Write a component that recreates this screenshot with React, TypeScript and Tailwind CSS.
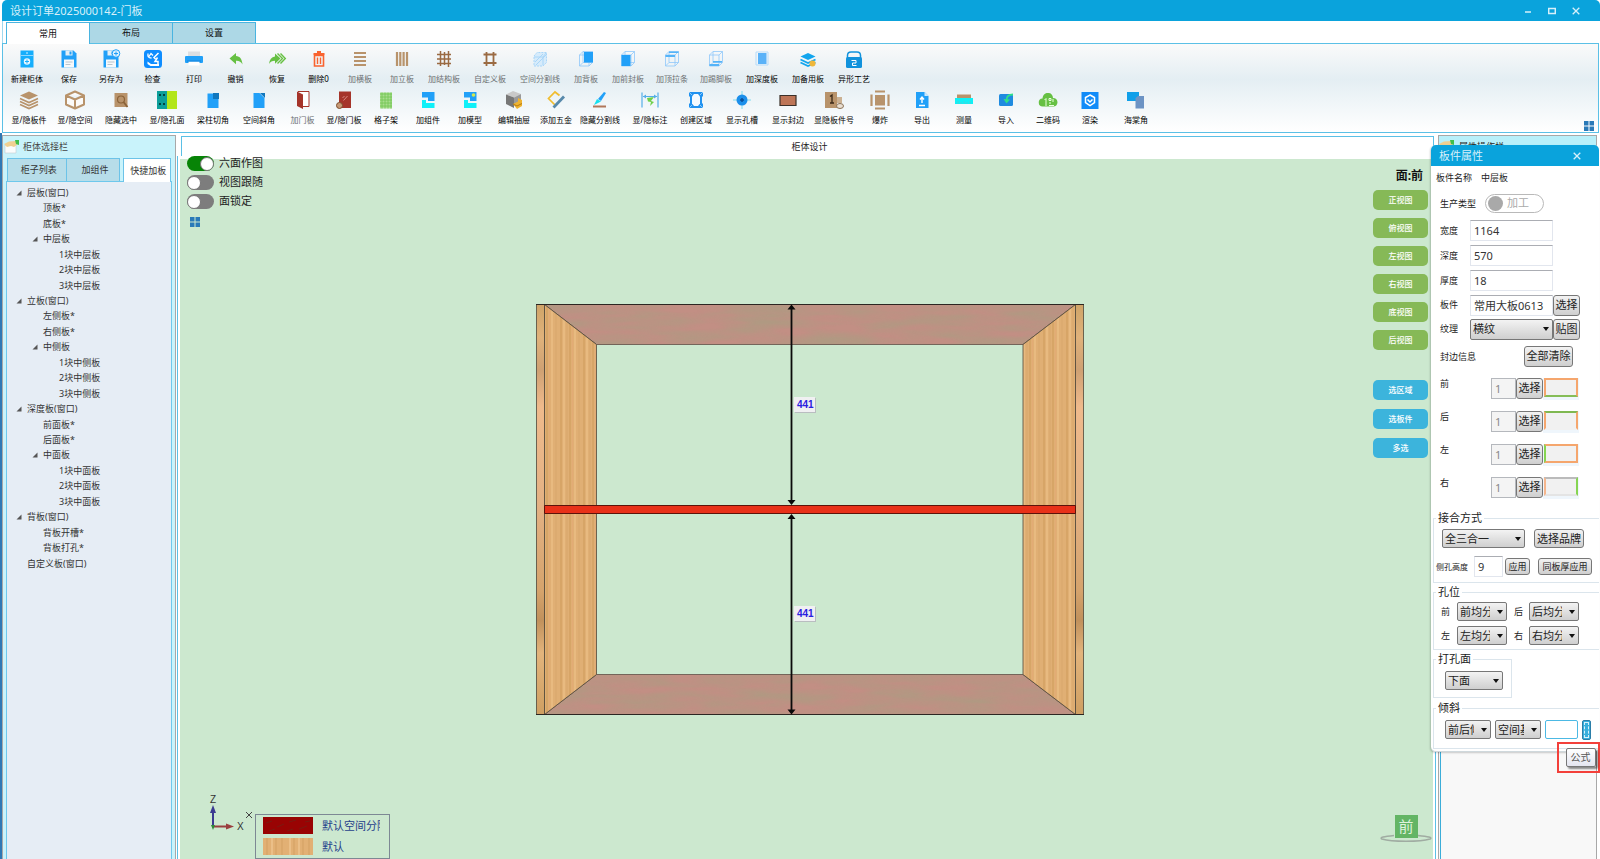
import React, { useState } from "react";
import clsx from "clsx";

const BLUE = "#21a0f8";
const BROWN = "#b8936b";
const WOOD = "#9a6a42";
const GREEN = "#66c043";

const floppy = (
  <>
    <path d="M2.500 1.500h12l3 3v14h-15z" fill={BLUE} />
    <path d="M6.500 1.500h7v5h-7z" fill="#e4eef5" />
    <path d="M10.500 2.500h2v3h-2z" fill={BLUE} />
    <path d="M5 10.500h10v8H5z" fill="#f6f9fb" />
    <path d="M6.500 13h7M6.500 15.500h5" stroke="#b9c4cc" />
  </>
);

const cube = (
  <path
    d="M7 2.500h9.500v11H7zM3.500 6h9.500v11H3.500zM3.500 6 7 2.500M13 6l3.500-3.500M13 17l3.500-3.500M3.500 17 7 13.500"
    fill="none"
    stroke="#8fc8fa"
    strokeWidth="0.8"
  />
);

const ICONS: Record<string, React.ReactNode> = {
  cabinet: (
    <>
      <path d="M3.500 1.500h13v17h-13z" fill="#16aefc" />
      <path d="M3.500 6.500h13" stroke="#8fd8ff" />
      <path d="M10 3v2" stroke="#d6f1ff" />
      <circle cx="10" cy="12.500" r="3.200" fill="#e8f7ff" />
      <path d="M10 10.500v4M8 12.500h4" stroke="#16aefc" />
    </>
  ),
  save: floppy,
  saveAs: (
    <>
      {floppy}
      <circle cx="15" cy="4.500" r="3.800" fill="#dff1fe" stroke={BLUE} />
      <path d="M15 2.500v4M13 4.500h4" stroke={BLUE} />
    </>
  ),
  check: (
    <>
      <rect x="1" y="1" width="18" height="18" rx="3.500" fill="#0f8dff" />
      <path d="M5 4.500c-.5 3 .5 4.500 3.500 4.500M6 7.500l2-3 2 2" fill="none" stroke="#fff" strokeWidth="1.300" />
      <path d="M15.500 4 11 8.500l1.500 1.500M14.500 8.500 12 12.500h3v3" fill="none" stroke="#fff" strokeWidth="1.500" />
      <path d="M4.500 12.500 8 15h8v2H7.500l-3-2z" fill="#fff" />
    </>
  ),
  print: (
    <>
      <path d="M4 2.500h12v5H4z" fill="#dcdfe2" />
      <rect x="1" y="7" width="18" height="7" rx="1" fill={BLUE} />
      <path d="M4.500 12.500h11v4h-11z" fill="#fff" />
      <path d="M3 12h14" stroke="#1784dc" />
    </>
  ),
  undo: <path d="M3.500 9.500 10 4v3c4 .3 6 3 6.500 8.500C15 12.500 13 11.500 10 11.700v3.500z" fill={GREEN} />,
  redo: (
    <>
      <path d="M13.500 9.500 8 4.500v3C4.500 8 2.500 10.500 2 15c1.500-2.500 3-3.300 6-3.300v3z" fill={GREEN} />
      <path d="m10.500 4.500 5 5-5 5M13.500 4.500l4.800 5-4.800 5" fill="none" stroke={GREEN} strokeWidth="1.400" />
    </>
  ),
  trash: (
    <>
      <path d="M5.500 6.500h9V17h-9z" fill="none" stroke="#f9632f" strokeWidth="1.600" />
      <path d="M4.500 5h11M8 3h4" stroke="#f9632f" strokeWidth="1.800" />
      <path d="M8.500 8.500v6.500M11.500 8.500v6.500" stroke="#f9632f" strokeWidth="1.400" />
    </>
  ),
  hBoards: <path d="M4 4h12M4 8h12M4 12h12M4 16h12" stroke={BROWN} strokeWidth="1.800" />,
  vBoards: <path d="M5 3v14M8.300 3v14M11.600 3v14M15 3v14" stroke={BROWN} strokeWidth="2.200" />,
  frame: (
    <path d="M3 5.500h14M3 10h14M3 14.500h14M6.500 2v15M10.500 3v13M14.500 2v16" stroke={WOOD} strokeWidth="1.500" />
  ),
  custom: <path d="M3.500 5.500h13M3.500 14h13M6.500 3v14M13.500 3v14" stroke={WOOD} strokeWidth="1.800" />,
  splitLine: (
    <>
      <path d="M4 7 7 3.500h9.500v10L13 17H4z" fill="#d6ebfb" stroke="#a9d6f8" strokeDasharray="2 1" />
      <path d="m5 13 8-8M6 16 16 6M4 8h9v8M13 8l3-4" fill="none" stroke="#a9d6f8" />
    </>
  ),
  back: (
    <>
      {cube}
      <path d="M8 3h9v10.500H8z" fill={BLUE} />
    </>
  ),
  front: (
    <>
      {cube}
      <path d="M3.500 6h9v11h-9z" fill={BLUE} />
    </>
  ),
  topRail: (
    <>
      {cube}
      <path d="M3.500 6h9.500v2H3.500zM7 2.500h9.500v1.500H7z" fill="#55b4f8" />
    </>
  ),
  kick: (
    <>
      {cube}
      <path d="M3.500 15h9.500v2H3.500zM7 12h9v1.500H7z" fill="#55b4f8" />
    </>
  ),
  depth: (
    <>
      <path d="M4 3h12v13H4z" fill="none" stroke="#b5dbfa" />
      <path d="M6 4h8.500v11H6z" fill="#5ab2f8" />
    </>
  ),
  spare: (
    <>
      <path d="m10 4 7.500 3.500L10 11 2.500 7.500z" fill="#12a5ee" />
      <path d="m2.500 10.500 7.500 3.500 7.500-3.500M2.500 13.500 10 17l7.500-3.500" fill="none" stroke="#12a5ee" strokeWidth="1.700" />
      <circle cx="14.500" cy="14.500" r="3" fill="#efb73a" />
    </>
  ),
  shape: (
    <>
      <path d="M3.500 9V6.500C3.500 4 5 3 7 3h6c2 0 3.500 1 3.500 3.500V9" fill="none" stroke="#1192dc" strokeWidth="1.500" />
      <rect x="2" y="8" width="16" height="11" rx="1.500" fill="#1192dc" />
      <path d="M7.500 11.500H12v2.500H8.500v2.500h4" fill="none" stroke="#fff" />
    </>
  ),
  boards: (
    <>
      <path d="m10 1.500 9 4-9 4-9-4z" fill={BROWN} />
      <path d="m1 8.500 9 4 9-4M1 11.500l9 4 9-4M1 14.500l9 4 9-4" fill="none" stroke={BROWN} strokeWidth="1.600" />
    </>
  ),
  space: (
    <path d="m10 1.500 9 4v9l-9 4-9-4v-9zM1 5.500l9 4 9-4M10 9.500v9" fill="#fbfaf8" stroke={BROWN} strokeWidth="2" strokeLinejoin="round" />
  ),
  hideSel: (
    <>
      <path d="M3.500 3h13v14h-13z" fill={BROWN} />
      <circle cx="10" cy="9.500" r="3.500" fill="none" stroke="#8a6238" strokeWidth="1.200" />
      <path d="m12.500 12 4 5" stroke="#8a6238" strokeWidth="1.800" />
    </>
  ),
  hole: (
    <>
      <path d="M0 1h10v18H0z" fill="#0d9f9b" />
      <path d="M10 1h10v18H10z" fill="#b2e61b" />
      <path d="M2 5h2M6 5h2M2 14h2M6 14h2" stroke="#044" strokeWidth="2" />
    </>
  ),
  column: (
    <>
      <path d="M4.500 3.500h11V18h-11z" fill={BLUE} />
      <path d="M10 3h6v6h-6z" fill="#1177bd" />
    </>
  ),
  bevel: (
    <>
      <path d="M4.500 3h6l5 5v10h-11z" fill={BLUE} />
      <path d="M11 3h5v5z" fill="#1177bd" />
    </>
  ),
  door: (
    <>
      <path d="M5 1.500h11v15H8" fill="#fff" stroke="#a5342a" />
      <path d="m4 1.500 6 3V19l-6-3z" fill="#a5342a" />
    </>
  ),
  doorToggle: (
    <>
      <path d="M5 1.500h12V18H5z" fill="#a5342a" />
      <path d="m9.500 10.500 4-4.500M8.500 8l2-2" stroke="#d98880" />
      <circle cx="5.500" cy="15.500" r="3" fill="#c79a77" stroke="#7c4d2c" />
    </>
  ),
  lattice: (
    <>
      <path d="M4 2.500h12v16H4z" fill="#a9dd8e" />
      <path d="M4 4h12M4 7h12M4 10h12M4 13h12M4 16h12M6 2.500v16M9 2.500v16M12 2.500v16M15 2.500v16" stroke="#72c653" strokeWidth="0.8" />
    </>
  ),
  component: (
    <>
      <path d="M4 2h12.500v9H10V7.500H4z" fill={BLUE} />
      <path d="M4 10h4v3h8.500v5H4z" fill="#0ff0f8" />
    </>
  ),
  model: (
    <>
      <path d="M4 2h12.500v9H10V7.500H4z" fill={BLUE} />
      <path d="M4 10h4v3h8.500v5H4z" fill="#0ff0f8" />
      <circle cx="13.500" cy="5" r="1.800" fill="#d5e94e" />
    </>
  ),
  drawer: (
    <>
      <path d="m9 1 8 3-7 3.500-8-3z" fill="#c9c9c9" />
      <path d="m2 4.500 8 3V18l-8-4z" fill="#777" />
      <path d="M10 7.500 17 4v8l-7 3z" fill="#9a9a9a" />
      <path d="m9 14 5-2.500V8l4 2v6l-5 3z" fill="#efb331" />
      <path d="m9 14 4 2 5-2.500" fill="none" stroke="#b67b10" />
    </>
  ),
  hardware: (
    <>
      <path d="M9 15 2.500 8.500 9 2l4.500 3.500" fill="none" stroke="#f0bd2f" strokeWidth="1.700" />
      <path d="M7.500 17.500 18 6.500" stroke="#5789ab" strokeWidth="2.800" />
    </>
  ),
  hideSplit: (
    <>
      <path d="M3 16.500h13" stroke="#b0775a" strokeWidth="2" />
      <path d="m4 15 3-6 4 2.500z" fill="#15e1f0" />
      <path d="m8 9 6-7 2 1-5 8z" fill={BLUE} />
    </>
  ),
  dimension: (
    <>
      <path d="M2 2.500v15M18 2.500v15M3 6.500h14" stroke="#55aee8" strokeWidth="1.200" />
      <path d="m3 6.500 3-2v4zM17 6.500l-3-2v4z" fill="#55aee8" />
      <path d="m7 8 7-1-3 4 3 1-4 4 1-4-3-.500z" fill="#6fd04a" />
    </>
  ),
  region: (
    <>
      <path d="M3 2h14v4l-1 1v6l1 1v4H3v-4l1-1V7L3 6z" fill="#2192f0" />
      <path d="M8 4h4l2 2.500v7L12 16H8l-2-2.500v-7z" fill="#f4faff" />
      <path d="m3 2 3 3M17 2l-3 3M3 18l3-3M17 18l-3-3" stroke="#8ccbfb" />
    </>
  ),
  slot: (
    <>
      <path d="M10 1v18M1 10h18" stroke="#7fdcf0" />
      <circle cx="10" cy="10" r="5.500" fill="#1c8fea" />
      <path d="M10 8v4M8 10h4" stroke="#0a4f9a" strokeWidth="1.500" />
    </>
  ),
  edge: <path d="M2 5.500h16v10H2z" fill="#bd7557" stroke="#3b3029" strokeWidth="1.200" />,
  boardNo: (
    <>
      <path d="M1 2h12v16H1z" fill={BROWN} />
      <path d="m6 6.500 2-1.500v8M6 13h4" fill="none" stroke="#3a2817" strokeWidth="1.300" />
      <path d="M13 7h5v6h-5z" fill="#cbb193" />
      <ellipse cx="16" cy="16" rx="3.500" ry="2.500" fill="#e9dfd3" stroke="#8b7256" />
    </>
  ),
  explode: (
    <>
      <path d="M5 5h10v10.500H5z" fill={BROWN} />
      <path d="M5 1.500h10M5 18.500h10M1.500 4.500v11.500M18.500 4.500v11.500" stroke={BROWN} strokeWidth="2.200" />
    </>
  ),
  exportFile: (
    <>
      <path d="M4 2h8.500l4 4v12H4z" fill={BLUE} />
      <path d="M12.500 2v4h4z" fill="#cfe8fb" />
      <path d="M10 13V7.500M8 9.500l2-2.500 2 2.500M7 15.500h6" fill="none" stroke="#fff" strokeWidth="1.400" />
    </>
  ),
  measure: (
    <>
      <path d="M3 4.500h14V8H3z" fill={BROWN} />
      <path d="M1 8h18v6H1z" fill="#0ef1f6" />
      <path d="M4 11v3M7 12v2M10 11v3M13 12v2M16 11v3" stroke="#58c9d3" strokeWidth="0.800" />
    </>
  ),
  importFile: (
    <>
      <rect x="3" y="4" width="14" height="12" rx="1.500" fill="#1f8be0" />
      <path d="M17 4.500c-4 0-6.500 1.500-6.500 6" fill="none" stroke="#2fe08a" strokeWidth="1.800" />
      <path d="m7.500 9 3 4.500L14 9.500z" fill="#2fe08a" />
    </>
  ),
  qr: (
    <>
      <path d="M5 16.500a4 4 0 0 1-.5-8C5 4 8 2.500 10.500 3c2.500 0 4.500 2 4.500 5 2.500 0 4.500 1.500 4.500 4.200s-2 4.300-4 4.300z" fill={GREEN} />
      <path d="M8 16V8.500L6.500 10M11 8.500h2v2h-2zM15 9v3M11 13h2M11 15.500h5" fill="none" stroke="#eaffdf" />
    </>
  ),
  render: (
    <>
      <path d="M1.500 2h17v17h-17z" fill="#118bf8" />
      <path d="m10 5 4.500 2.500v5L10 15.500l-4.500-3v-5z" fill="none" stroke="#fff" strokeWidth="1.500" />
      <path d="M7.500 9.500 10 12l2.500-2.500" fill="none" stroke="#fff" strokeWidth="1.500" />
    </>
  ),
  corner: (
    <>
      <path d="M1 2h12v9H1z" fill="#109fe9" />
      <path d="M9.500 8 12 6h6v12.500H9.500z" fill="#6c93c4" />
    </>
  ),
};

interface Tool {
  icon: keyof typeof ICONS;
  label: string;
  width?: string;
  muted?: boolean;
}

const ROW_ONE: Tool[] = [
  { icon: "cabinet", label: "新建柜体" },
  { icon: "save", label: "保存" },
  { icon: "saveAs", label: "另存为" },
  { icon: "check", label: "检查", width: "w-[41px]" },
  { icon: "print", label: "打印" },
  { icon: "undo", label: "撤销", width: "w-[41px]" },
  { icon: "redo", label: "恢复" },
  { icon: "trash", label: "删除0", width: "w-[41px]" },
  { icon: "hBoards", label: "加横板", muted: true },
  { icon: "vBoards", label: "加立板", muted: true },
  { icon: "frame", label: "加结构板", muted: true },
  { icon: "custom", label: "自定义板", width: "w-[50px]", muted: true },
  { icon: "splitLine", label: "空间分割线", width: "w-[50px]", muted: true },
  { icon: "back", label: "加背板", muted: true },
  { icon: "front", label: "加前封板", muted: true },
  { icon: "topRail", label: "加顶拉条", width: "w-[46px]", muted: true },
  { icon: "kick", label: "加踢脚板", muted: true },
  { icon: "depth", label: "加深度板", width: "w-[50px]" },
  { icon: "spare", label: "加备用板" },
  { icon: "shape", label: "异形工艺", width: "w-[50px]" },
];

const ROW_TWO: Tool[] = [
  { icon: "boards", label: "显/隐板件", width: "w-[46px]" },
  { icon: "space", label: "显/隐空间", width: "w-[46px]" },
  { icon: "hideSel", label: "隐藏选中", width: "w-[46px]" },
  { icon: "hole", label: "显/隐孔面", width: "w-[46px]" },
  { icon: "column", label: "梁柱切角", width: "w-[46px]" },
  { icon: "bevel", label: "空间斜角", width: "w-[46px]" },
  { icon: "door", label: "加门板", width: "w-[41px]", muted: true },
  { icon: "doorToggle", label: "显/隐门板" },
  { icon: "lattice", label: "格子架" },
  { icon: "component", label: "加组件" },
  { icon: "model", label: "加模型" },
  { icon: "drawer", label: "编辑抽屉", width: "w-[46px]" },
  { icon: "hardware", label: "添加五金", width: "w-[38px]" },
  { icon: "hideSplit", label: "隐藏分割线", width: "w-[50px]" },
  { icon: "dimension", label: "显/隐标注", width: "w-[50px]" },
  { icon: "region", label: "创建区域" },
  { icon: "slot", label: "显示孔槽", width: "w-[50px]" },
  { icon: "edge", label: "显示封边" },
  { icon: "boardNo", label: "显隐板件号", width: "w-[50px]" },
  { icon: "explode", label: "爆炸" },
  { icon: "exportFile", label: "导出" },
  { icon: "measure", label: "测量" },
  { icon: "importFile", label: "导入" },
  { icon: "qr", label: "二维码" },
  { icon: "render", label: "渲染" },
  { icon: "corner", label: "海棠角", width: "w-[50px]" },
];

interface TreeNode {
  label: string;
  level: 0 | 1 | 2;
  open?: boolean;
}

const TREE: TreeNode[] = [
  { label: "层板(窗口)", level: 0, open: true },
  { label: "顶板*", level: 1 },
  { label: "底板*", level: 1 },
  { label: "中层板", level: 1, open: true },
  { label: "1块中层板", level: 2 },
  { label: "2块中层板", level: 2 },
  { label: "3块中层板", level: 2 },
  { label: "立板(窗口)", level: 0, open: true },
  { label: "左侧板*", level: 1 },
  { label: "右侧板*", level: 1 },
  { label: "中侧板", level: 1, open: true },
  { label: "1块中侧板", level: 2 },
  { label: "2块中侧板", level: 2 },
  { label: "3块中侧板", level: 2 },
  { label: "深度板(窗口)", level: 0, open: true },
  { label: "前面板*", level: 1 },
  { label: "后面板*", level: 1 },
  { label: "中面板", level: 1, open: true },
  { label: "1块中面板", level: 2 },
  { label: "2块中面板", level: 2 },
  { label: "3块中面板", level: 2 },
  { label: "背板(窗口)", level: 0, open: true },
  { label: "背板开槽*", level: 1 },
  { label: "背板打孔*", level: 1 },
  { label: "自定义板(窗口)", level: 0 },
];

const LEVEL_PAD = ["pl-[9px]", "pl-[25px]", "pl-[41px]"];

const VIEWS = ["正视图", "俯视图", "左视图", "右视图", "底视图", "后视图"];

// border colours of the four edge-banding previews
const EDGES = [
  { label: "前", box: "border-t-[#f5a66d] border-x-[#f5a66d] border-b-[#86bd58]" },
  { label: "后", box: "border-t-[#7fb851] border-x-[#f5a66d] border-b-[#f1f1f1]" },
  { label: "左", box: "border-y-[#f5a66d] border-r-[#f5a66d] border-l-[#86d552]" },
  { label: "右", box: "border-t-[#bbbbbb] border-b-[#e4e4e4] border-l-[#f5b68d] border-r-[#86d552]" },
];

function ToolRow({ tools }: { tools: Tool[] }) {
  return (
    <div className="flex">
      {tools.map((t) => (
        <button
          key={t.label}
          type="button"
          className={clsx(
            "flex h-[41px] shrink-0 flex-col items-center gap-1 whitespace-nowrap text-[8px] leading-3",
            t.width ?? "w-[42px]",
            t.muted ? "text-[#6c6f72]" : "text-black"
          )}
        >
          <svg viewBox="0 0 20 20" className="size-5 shrink-0">
            {ICONS[t.icon]}
          </svg>
          {t.label}
        </button>
      ))}
    </div>
  );
}

function FourSquares() {
  return (
    <svg viewBox="0 0 10 10" className="size-[10px]">
      <path d="M0 0h4.500v4.500H0zM5.500 0H10v4.500H5.500zM0 5.500h4.500V10H0zM5.500 5.500H10V10H5.500z" fill="#2a7ab8" />
    </svg>
  );
}

function PanelIcon() {
  return (
    <svg viewBox="0 0 16 14" className="h-[14px] w-4 shrink-0">
      <path d="M1 5h11v8H1z" fill="#fafcfc" stroke="#c3ced0" strokeWidth="0.600" />
      <path d="m0 4 5-2.500L12 1l2 3-4 3-3-1-4 1z" fill="#efd091" />
      <path d="M11 0h4v5l-3-1z" fill="#3fbf4b" />
    </svg>
  );
}

function CloseIcon() {
  return (
    <svg viewBox="0 0 8 8" className="size-2">
      <path d="m.7.7 6.600 6.600M7.300.7.7 7.300" stroke="#d7f0fa" strokeWidth="1.300" />
    </svg>
  );
}

function Toggle({ label, on = false }: { label: string; on?: boolean }) {
  const [checked, setChecked] = useState(on);
  return (
    <label className="flex h-[15px] items-center gap-[5px] text-[11px] text-[#222]">
      <input
        type="checkbox"
        checked={checked}
        onChange={(e) => setChecked(e.target.checked)}
        className="flex h-[15px] w-[27px] appearance-none items-center rounded-full bg-[#7d7d7d] before:size-[14px] before:rounded-full before:border before:border-[#777] before:bg-white checked:justify-end checked:bg-[#078407]"
      />
      {label}
    </label>
  );
}

function Combo({ label, value, className }: { label: string; value: string; className: string }) {
  return (
    <span className={clsx("relative flex shrink-0", className)}>
      <select
        aria-label={label}
        className="h-full w-full appearance-none overflow-hidden rounded-[2px] border border-[#777] bg-linear-to-b from-[#f3f3f3] to-[#cfcfcf] pr-4 pl-[2px] text-[11px] leading-4 text-[#222]"
      >
        <option>{value}</option>
      </select>
      <svg viewBox="0 0 6 4" className="pointer-events-none absolute top-1/2 right-1 h-1 w-[6px] -translate-y-1/2">
        <path d="M0 0h6L3 4z" fill="#111" />
      </svg>
    </span>
  );
}

function Push({ children, className }: { children: React.ReactNode; className: string }) {
  return (
    <button
      type="button"
      className={clsx(
        "shrink-0 rounded-[3px] border border-[#777] bg-linear-to-b from-[#f3f3f3] to-[#cfcfcf] whitespace-nowrap text-[#222]",
        className
      )}
    >
      {children}
    </button>
  );
}

function SizeRow({ label, value }: { label: string; value: string }) {
  return (
    <label className="flex h-[25px] items-center pl-[9px]">
      <span className="w-[30px]">{label}</span>
      <input
        defaultValue={value}
        className="h-[21px] w-[83px] border border-[#e2e6ee] border-t-[#abadb3] pl-[3px] text-[11px] text-[#333]"
      />
    </label>
  );
}

function Group({ title, className, children }: { title: string; className: string; children: React.ReactNode }) {
  return (
    <fieldset className={clsx("ml-[2px] min-w-0 border border-[#dbe5ec]", className)}>
      <legend className="ml-[2px] px-[2px] text-[11px] leading-[14px] text-[#222]">{title}</legend>
      {children}
    </fieldset>
  );
}

function PropertyDialog() {
  return (
    <div className="absolute top-[12px] right-[1px] w-[168px] rounded-t-[5px] rounded-b-[5px] border-b border-[#cfd8dc] bg-white pb-[2px] text-[9px] text-[#222] shadow-[-1px_1px_2px_rgba(0,0,0,0.2)]">
      <div className="flex h-[21px] items-center justify-between rounded-t-[5px] bg-[#0aa3dc] pt-px pr-[18px] pl-2">
        <h2 className="text-[11px] text-[#d7f0fa]">板件属性</h2>
        <button type="button" aria-label="关闭属性">
          <CloseIcon />
        </button>
      </div>

      <div className="flex h-[23px] items-center gap-[9px] pl-[5px]">
        <span>板件名称</span>
        <span>中层板</span>
      </div>
      <div className="flex h-[29px] items-center pl-[9px]">
        <span className="w-[45px]">生产类型</span>
        <button
          type="button"
          className="flex h-[19px] w-[59px] items-center gap-1 rounded-full border border-[#b9b9b9] pl-[2px] text-[11px] text-[#aaa]"
        >
          <span className="size-[15px] rounded-full bg-[#a9a9a9]" />
          加工
        </button>
      </div>
      <SizeRow label="宽度" value="1164" />
      <SizeRow label="深度" value="570" />
      <SizeRow label="厚度" value="18" />
      <div className="flex h-6 items-center pl-[9px]">
        <label htmlFor="board" className="w-[30px]">
          板件
        </label>
        <input
          id="board"
          defaultValue="常用大板0613"
          className="h-[21px] w-[83px] border border-[#e2e6ee] border-t-[#abadb3] pl-[3px] text-[11px] text-[#333]"
        />
        <Push className="h-[21px] w-[27px] text-[11px]">选择</Push>
      </div>
      <div className="flex h-6 items-center pl-[9px]">
        <span className="w-[30px]">纹理</span>
        <Combo label="纹理" value="横纹" className="h-[21px] w-[83px]" />
        <Push className="h-[21px] w-[27px] text-[11px]">贴图</Push>
      </div>
      <div className="flex h-[31px] items-center justify-between pr-[26px] pl-[9px]">
        <span>封边信息</span>
        <Push className="h-[21px] w-[49px] text-[11px]">全部清除</Push>
      </div>

      {EDGES.map((e) => (
        <div key={e.label} className="flex h-[33px] items-start pt-[6px] pl-[9px]">
          <span className="w-[51px] leading-3">{e.label}</span>
          <input
            aria-label={`${e.label}封边`}
            defaultValue="1"
            disabled
            className="h-[21px] w-[25px] border border-[#b5b8bd] bg-[#f4f4f4] pl-[3px] text-[11px] text-[#888]"
          />
          <Push className="h-[21px] w-[27px] text-[11px]">选择</Push>
          <span className="h-[22px] w-9 bg-[#eff6fc] pl-px">
            <span className={clsx("block h-[19px] w-[34px] border-2 bg-[#f1f1f1]", e.box)} />
          </span>
        </div>
      ))}

      <Group title="接合方式" className="mt-[7px] border-r-0 pb-[5px]">
        <div className="flex gap-[9px] pt-1 pl-2">
          <Combo label="接合方式" value="全三合一" className="h-[19px] w-[83px]" />
          <Push className="h-[19px] w-[50px] text-[11px] leading-4">选择品牌</Push>
        </div>
        <div className="flex items-center pt-2 pl-[2px]">
          <label htmlFor="hole-height" className="w-[38px] text-[8px]">
            侧孔高度
          </label>
          <input
            id="hole-height"
            defaultValue="9"
            className="h-[21px] w-[29px] border border-[#e2e6ee] border-t-[#abadb3] pl-[3px] text-[11px] text-[#333]"
          />
          <Push className="ml-[2px] h-[17px] w-[25px] text-[9px]">应用</Push>
          <Push className="ml-2 h-[17px] w-[54px] text-[9px]">同板厚应用</Push>
        </div>
      </Group>

      <Group title="孔位" className="mt-[2px] border-r-0 pb-1">
        <div className="grid grid-cols-[16px_50px_7px_15px_50px] items-center gap-y-[5px] pt-[3px] pl-[7px]">
          <span>前</span>
          <Combo label="前孔位" value="前均分布" className="h-[19px] w-[50px]" />
          <span />
          <span>后</span>
          <Combo label="后孔位" value="后均分布" className="h-[19px] w-[50px]" />
          <span>左</span>
          <Combo label="左孔位" value="左均分布" className="h-[19px] w-[50px]" />
          <span />
          <span>右</span>
          <Combo label="右孔位" value="右均分布" className="h-[19px] w-[50px]" />
        </div>
      </Group>

      <Group title="打孔面" className="mt-[2px] w-[79px] pb-[7px]">
        <div className="pt-[5px] pl-[11px]">
          <Combo label="打孔面" value="下面" className="h-[19px] w-[58px]" />
        </div>
      </Group>

      <Group title="倾斜" className="mt-[3px] border-r-0 pb-2">
        <div className="flex gap-1 pt-[5px] pl-[11px]">
          <Combo label="倾斜方向" value="前后倾斜" className="h-[19px] w-[46px]" />
          <Combo label="倾斜基准" value="空间基准" className="h-[19px] w-[46px]" />
          <input aria-label="倾斜值" className="h-[19px] w-[33px] rounded-[2px] border border-[#4cb9e4]" />
          <button
            type="button"
            aria-label="公式"
            className="flex h-5 w-[9px] items-stretch justify-center rounded-[2px] border border-[#2b7ea8] bg-[#38afdc] p-px"
          >
            <span className="w-full border border-dashed border-[#d8f1fb]" />
          </button>
        </div>
      </Group>

      <div className="absolute -right-[1px] -bottom-[22px] flex h-[31px] w-[43px] items-center justify-center border-2 border-[#f3403a] pl-1">
        <span
          role="tooltip"
          className="flex h-[19px] w-[30px] items-center justify-center rounded-[2px] border border-[#777] bg-linear-to-b from-white to-[#e4e5f0] text-[10px] text-[#555] shadow-[2px_2px_2px_rgba(0,0,0,0.45)]"
        >
          公式
        </span>
      </div>
    </div>
  );
}

// local coordinates: 0,0 is the top left corner of the carcass
function Carcass() {
  return (
    <svg
      viewBox="0 0 549 412"
      className="h-[412px] w-[549px]"
      fontFamily="'Liberation Sans Narrow', 'Liberation Sans', Arial, sans-serif"
    >
      <defs>
        <linearGradient id="edgeL" x1="0" y1="0" x2="0" y2="1">
          <stop offset="0" stopColor="#cfa468" />
          <stop offset="0.080" stopColor="#e0b27b" />
          <stop offset="0.160" stopColor="#cfa173" />
          <stop offset="0.250" stopColor="#efba8c" />
          <stop offset="0.500" stopColor="#e3b183" />
          <stop offset="0.700" stopColor="#d5a36c" />
          <stop offset="0.770" stopColor="#c1915c" />
          <stop offset="0.850" stopColor="#e3b47c" />
          <stop offset="1" stopColor="#cf9f62" />
        </linearGradient>
        <pattern id="grain" width="23" height="412" patternUnits="userSpaceOnUse">
          <path d="M0 0h23v412H0z" fill="#e0af74" />
          <path d="M2 0v412M11 0v412" stroke="#d5a263" strokeWidth="1.500" />
          <path d="M5 0v412M16 0v412" stroke="#e8ba80" strokeWidth="2" />
          <path d="M8 0v412M20 0v412" stroke="#d9a76b" />
          <path d="M13.500 0v412" stroke="#e3ab75" />
        </pattern>
        <filter id="cloud" x="0" y="0" width="1" height="1" colorInterpolationFilters="sRGB">
          <feTurbulence type="fractalNoise" baseFrequency="0.015 0.09" numOctaves="3" seed="4" />
          <feColorMatrix values="0 0 0 0 0.690  0 0 0 0 0.600  0 0 0 0 0.510  1.800 0 0 0 -0.500" />
          <feComposite in2="SourceGraphic" operator="in" result="n" />
          <feMerge>
            <feMergeNode in="SourceGraphic" />
            <feMergeNode in="n" />
          </feMerge>
        </filter>
      </defs>
      <g filter="url(#cloud)" fill="#c28f84">
        <path d="M8.500.5h531L487 40.500H60.500z" />
        <path d="M60.500 370.500H487l52.500 40H8.500z" />
      </g>
      <path d="M8.500.5h531L487 40.500H60.500zM60.500 370.500H487l52.500 40H8.500z" fill="none" stroke="#5f5048" strokeWidth="0.800" />
      <path d="M8.500.5 60.500 40.500v330l-52 40zM539.500.5 487 40.500v330l52.500 40z" fill="url(#grain)" stroke="#4f4638" strokeWidth="0.800" />
      <path d="M.5.5h8v410h-8zM539.500.5h8v410h-8z" fill="url(#edgeL)" stroke="#4f4638" strokeWidth="0.800" />
      <path d="M0 .5h548M0 410.500h548" stroke="#2c2622" />
      <path d="M8.500 201.500h531v8H8.500z" fill="#e83119" stroke="#5c130a" />
      <path d="M255.500 4v194M255.500 213v194" stroke="#0a0a0a" strokeWidth="1.800" />
      <path
        d="m255.500.5 4 5h-8zM255.500 201l4-5h-8zM255.500 210l4 5h-8zM255.500 410.500l4-5h-8z"
        fill="#0a0a0a"
      />
      {[93, 302].map((y) => (
        <g key={y}>
          <path d={`M259 ${y + 1}h21v15h-21z`} fill="#b9bdc0" />
          <path d={`M258 ${y}h21v15h-21z`} fill="#f0f0f2" />
          <text x="261" y={y + 11} fontSize="10" fontWeight="bold" fill="#2a21e0">
            441
          </text>
        </g>
      ))}
    </svg>
  );
}

function Legend() {
  return (
    <div className="absolute bottom-0 left-[27px] flex items-end">
      <svg viewBox="0 0 40 44" className="mb-[23px] h-11 w-10" fontFamily="Liberation Sans, Arial, sans-serif">
        <path d="M6 35V20" stroke="#3b3a91" strokeWidth="2" />
        <path d="m6 13 3 8H3z" fill="#3b3a91" />
        <path d="M6 34.500h14" stroke="#9a3f3f" strokeWidth="2" />
        <path d="m27 34.500-8 3v-6z" fill="#9a3f3f" />
        <path d="m4 33 2 5 2-5z" fill="#2f8a3a" />
        <text x="3" y="11" fontSize="10" fill="#333">
          Z
        </text>
        <text x="30" y="38" fontSize="10" fill="#333">
          X
        </text>
      </svg>
      <button type="button" aria-label="关闭图例" className="-ml-[2px] mr-[2px] mb-10 w-[8px]">
        <svg viewBox="0 0 8 8" className="size-2">
          <path d="m1 1 6 6M7 1 1 7" stroke="#444" />
        </svg>
      </button>
      <div className="h-[45px] w-[135px] border border-[#7d8894] pt-[2px] pl-[7px] text-[11px] text-[#26418b]">
        <div className="flex h-[21px] items-start gap-[9px]">
          <svg viewBox="0 0 50 17" className="h-[17px] w-[50px] shrink-0">
            <path d="M0 0h50v17H0z" fill="#990303" />
            <path d="m3 6 6-2M14 10l7-3M26 5l7-2M36 12l8-3M6 14l6-2M42 5l5-1M24 14l6-2" stroke="#7b1a10" />
          </svg>
          <span className="w-[58px] overflow-hidden leading-[17px] whitespace-nowrap">默认空间分隔线</span>
        </div>
        <div className="flex items-start gap-[9px]">
          <svg viewBox="0 0 50 17" className="h-[17px] w-[50px] shrink-0">
            <path d="M0 0h50v17H0z" fill="#e2b074" />
            <path d="M4 0v17M13 0v17M19 0v17M31 0v17M40 0v17M46 0v17" stroke="#d3a062" />
            <path d="M9 0v17M27 0v17M36 0v17" stroke="#ebbf88" strokeWidth="2" />
          </svg>
          <span className="leading-[17px]">默认</span>
        </div>
      </div>
    </div>
  );
}

export default function App() {
  const [tab, setTab] = useState("常用");

  return (
    <div className="flex min-h-screen flex-col overflow-x-hidden bg-white font-['Noto_Sans','Noto_Sans_CJK_SC',sans-serif]">
      <header className="ml-[2px] flex h-[21px] items-center justify-between rounded-t-[5px] bg-[#0aa3dc] pr-5 pl-2">
        <h1 className="pt-[2px] text-[11px] text-[#d7f0fa]">设计订单2025000142-门板</h1>
        <div className="flex items-center gap-4">
          <button type="button" aria-label="最小化">
            <svg viewBox="0 0 8 8" className="size-2">
              <path d="M1 5h6" stroke="#d7f0fa" strokeWidth="1.500" />
            </svg>
          </button>
          <button type="button" aria-label="最大化">
            <svg viewBox="0 0 8 8" className="size-2">
              <path d="M.7 1.500h6.600v5H.7z" fill="none" stroke="#d7f0fa" strokeWidth="1.500" />
            </svg>
          </button>
          <button type="button" aria-label="关闭">
            <CloseIcon />
          </button>
        </div>
      </header>

      <nav className="ml-[2px] flex h-[22px] border-l border-[#9fd8ee] pt-px pl-[3px]">
        {["常用", "布局", "设置"].map((t) => (
          <button
            key={t}
            type="button"
            onClick={() => setTab(t)}
            className={clsx(
              "-mr-px w-[84px] border border-b-0 border-[#4ab4e0] text-[9px] text-[#111]",
              tab === t ? "relative z-10 -mb-px bg-white" : "bg-[#add8e6]"
            )}
          >
            {t}
          </button>
        ))}
      </nav>

      <div className="mr-[1px] ml-[2px] flex h-[90px] items-end justify-between border border-[#5bc0e6] bg-linear-to-b from-[#fafafa] via-[#e4eef3] via-40% to-white">
        <div className="h-full pt-[5px] pl-[3px]">
          <ToolRow tools={ROW_ONE} />
          <ToolRow tools={ROW_TWO} />
        </div>
        <button type="button" aria-label="布局切换" className="mr-1 mb-px">
          <FourSquares />
        </button>
      </div>

      <main className="relative flex flex-1 border-l-2 border-[#2f78b4] pt-[2px]">
        <aside className="flex w-[174px] shrink-0 flex-col border border-b-0 border-[#a8a8a8] bg-[#c9f3fb]">
          <div className="flex h-[22px] items-center gap-[3px] pl-px text-[9px] text-[#444]">
            <PanelIcon />
            <h2>柜体选择栏</h2>
          </div>
          <div className="flex h-[23px] items-stretch px-1 text-[9px] text-[#333]">
            <button type="button" className="w-[60px] border border-b-0 border-[#6cc3e8] bg-[#b7dde9] pl-1">
              柜子列表
            </button>
            <button type="button" className="w-[54px] border border-b-0 border-l-0 border-[#6cc3e8] bg-[#b7dde9] pl-1">
              加组件
            </button>
            <button
              type="button"
              className="relative z-10 -mb-px ml-[3px] w-[48px] border border-b-0 border-[#6cc3e8] bg-white pl-[2px] whitespace-nowrap"
            >
              快捷加板
            </button>
          </div>
          <div className="mx-[3px] flex-1 border border-b-0 border-[#6ec8ec] bg-[#e6edf5] pt-[3px]">
            <ul className="grid h-[386px] auto-rows-fr text-[9px] text-[#333]">
              {TREE.map((n) => (
                <li key={n.label} className={clsx("flex items-center gap-[5px]", LEVEL_PAD[n.level])}>
                  <svg viewBox="0 0 6 6" className="size-[6px] shrink-0">
                    {n.open && <path d="M5.500.5v5h-5z" fill="#555" />}
                  </svg>
                  {n.label}
                </li>
              ))}
            </ul>
          </div>
        </aside>

        <section className="ml-px flex min-w-0 flex-1 flex-col">
          <h2 className="mt-px mr-[2px] ml-1 h-5 border border-b-0 border-[#5bc0e6] pl-1 text-center text-[9px] leading-5 text-[#222]">
            柜体设计
          </h2>
          <div className="relative flex flex-1 border-x border-[#5bc0e6] pt-[3px] pr-[2px] pl-[2px]">
            <div className="relative flex flex-1 items-center justify-center bg-[#cce8cf] pt-[2px] pl-2">
              <div className="absolute -top-[3px] left-[7px] flex flex-col gap-1">
                <Toggle label="六面作图" on />
                <Toggle label="视图跟随" />
                <Toggle label="面锁定" />
                <button type="button" aria-label="四视图" className="mt-1 ml-[3px] self-start">
                  <FourSquares />
                </button>
              </div>

              <Carcass />

              <div className="absolute top-[11px] right-[5px] flex w-[55px] flex-col gap-2">
                <div className="pr-[5px] text-right text-[12px] leading-3 font-bold text-[#111]">面:前</div>
                {VIEWS.map((v) => (
                  <button key={v} type="button" className="h-5 rounded-[5px] bg-[#86b957] text-[8px] font-medium text-white">
                    {v}
                  </button>
                ))}
                {["选区域", "选板件", "多选"].map((v) => (
                  <button
                    key={v}
                    type="button"
                    className="mt-px h-5 rounded-[5px] bg-[#3cb4dc] text-[8px] font-medium text-white [&:nth-of-type(7)]:mt-[22px]"
                  >
                    {v}
                  </button>
                ))}
              </div>

              <Legend />

              <div className="absolute right-0 bottom-[17px] flex w-[54px] flex-col items-center">
                <span className="relative z-10 flex size-[23px] items-center justify-center bg-[#63b565] text-[15px] text-[#dff2dc]">
                  前
                </span>
                <svg viewBox="0 0 54 8" className="-mt-1 h-2 w-[54px]">
                  <path d="M15 1.500C5 2.500 0 3.500 3 5c10 3 38 3 48 0 3-1.500-2-2.500-12-3.500" fill="none" stroke="#a0aca2" strokeWidth="1.500" />
                </svg>
              </div>
            </div>
          </div>
        </section>

        <aside className="mr-[3px] ml-[2px] flex w-[159px] shrink-0 flex-col border border-b-0 border-[#a8a8a8] bg-[#f8f8f8]">
          <div className="flex h-[22px] items-center gap-1 bg-[#b8f0fa] text-[9px] text-[#222]">
            <PanelIcon />
            <h2>属性操作栏</h2>
          </div>
          <div className="ml-px flex-1 border-l border-[#3badd9]" />
        </aside>

        <PropertyDialog />
      </main>
    </div>
  );
}
